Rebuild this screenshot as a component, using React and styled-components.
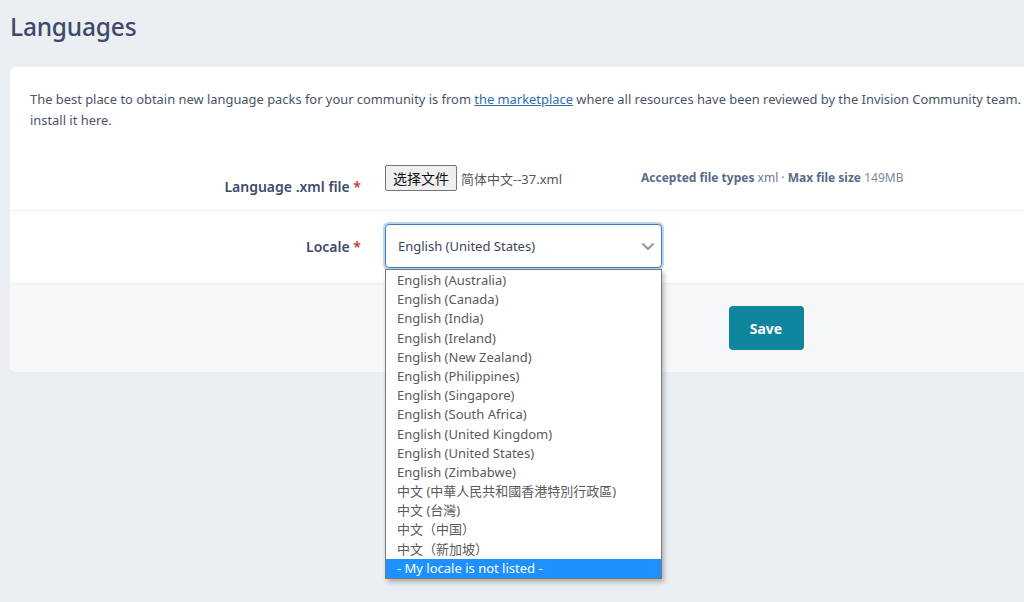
import React from 'react';
import styled, { createGlobalStyle } from 'styled-components';

const GlobalStyle = createGlobalStyle`
  html {
    overflow: hidden;
    background: #ebeef2;
  }
  body {
    margin: 0;
    min-height: 602px;
    background: #ebeef2;
    font-family: "Noto Sans", "Open Sans", "Noto Sans CJK SC", sans-serif;
    color: #4a5468;
  }
`;

const locales = [
  'English (Australia)',
  'English (Canada)',
  'English (India)',
  'English (Ireland)',
  'English (New Zealand)',
  'English (Philippines)',
  'English (Singapore)',
  'English (South Africa)',
  'English (United Kingdom)',
  'English (United States)',
  'English (Zimbabwe)',
  '中文 (中華人民共和國香港特別行政區)',
  '中文 (台灣)',
  '中文（中国）',
  '中文（新加坡）',
  '- My locale is not listed -',
];

const App = () => {
  return (
    <Page>
      <GlobalStyle />
      <Title>Languages</Title>
      <Card>
        <Intro>
          The best place to obtain new language packs for your community is from{' '}
          <IntroLink href="#">the marketplace</IntroLink> where all resources have been reviewed by the
          Invision Community team.  If you have downloaded a language pack, you can
          <br />
          install it here.
        </Intro>

        <FormRow>
          <Label top={12}>
            Language .xml file <Required>*</Required>
          </Label>
          <FieldLine>
            <FilePicker>
              <NativeButton type="button">选择文件</NativeButton>
              <FileName>简体中文--37.xml</FileName>
            </FilePicker>
            <FileHint>
              <b>Accepted file types</b> xml · <b>Max file size</b> <span>149MB</span>
            </FileHint>
          </FieldLine>
        </FormRow>

        <FormRow last>
          <Label top={13}>
            Locale <Required>*</Required>
          </Label>
          <SelectWrap>
            <SelectBox>
              <span>English (United States)</span>
              <svg width="14" height="9" viewBox="0 0 14 9">
                <path d="M1.5 1.5 L7 7 L12.5 1.5" fill="none" stroke="#9a9a9a" strokeWidth="2.2" />
              </svg>
            </SelectBox>
            <DropList>
              {locales.map((l, idx) => (
                <Option key={idx} selected={idx === locales.length - 1}>
                  {l}
                </Option>
              ))}
            </DropList>
          </SelectWrap>
        </FormRow>

        <Footer>
          <SaveButton type="button">Save</SaveButton>
        </Footer>
      </Card>
    </Page>
  );
};

const Page = styled.div`
  padding: 0 10px;
`;

const Title = styled.h1`
  margin: 0;
  padding-top: 10px;
  font-size: 24.5px;
  line-height: 34px;
  font-weight: 500;
  color: #3e4a6b;
  letter-spacing: -0.2px;
`;

const Card = styled.div`
  margin-top: 23px;
  width: 1512px;
  background: #fff;
  border-radius: 6px;
`;

const Intro = styled.p`
  margin: 0;
  padding: 22px 20px 19px;
  font-size: 12.9px;
  line-height: 21px;
  color: #4a5468;
  white-space: pre;
`;

const IntroLink = styled.a`
  color: #2d6ea8;
  text-decoration: underline;
`;

const FormRow = styled.div`
  display: grid;
  grid-template-columns: 375px 1fr;
  align-items: start;
  padding: ${(p) => (p.last ? '13px 0 15px' : '15px 0 13px')};
  border-bottom: 1px solid #ebeef2;
`;

const Label = styled.div`
  text-align: right;
  padding-right: 24px;
  padding-top: ${(p) => p.top}px;
  font-size: 14px;
  line-height: 20px;
  font-weight: 600;
  color: #3e4a6b;
`;

const Required = styled.span`
  color: #c5353a;
`;

const FieldLine = styled.div`
  display: flex;
  align-items: center;
  gap: 24px;
`;

const FilePicker = styled.div`
  display: flex;
  align-items: center;
  gap: 4px;
  width: 232px;
`;

const NativeButton = styled.button`
  height: 26px;
  padding: 0 7px;
  font-family: "Noto Sans CJK SC", sans-serif;
  font-size: 14px;
  color: #111;
  background: #efefef;
  border: 1px solid #767676;
  border-radius: 2px;
`;

const FileName = styled.span`
  font-family: "Noto Sans", "Noto Sans CJK SC", sans-serif;
  font-size: 13px;
  color: #555;
`;

const FileHint = styled.div`
  margin-top: -2px;
  font-size: 12px;
  color: #6a7892;
  b {
    font-weight: 700;
    color: #5a6a8c;
  }
  span {
    color: #7a879e;
  }
`;

const SelectWrap = styled.div`
  position: relative;
  width: 277px;
`;

const SelectBox = styled.div`
  display: flex;
  align-items: center;
  justify-content: space-between;
  height: 44px;
  box-sizing: border-box;
  padding: 0 6px 0 12px;
  border: 1px solid #3f7fbd;
  border-radius: 4px;
  box-shadow: 0 0 0 2px #bcd6ee;
  background: #fff;
  font-size: 13px;
  color: #3c4558;
`;

const DropList = styled.div`
  position: absolute;
  left: 0;
  top: 45px;
  width: 277px;
  box-sizing: border-box;
  padding-top: 1px;
  background: #fff;
  border: 1px solid #7a7a7a;
  box-shadow: 2px 3px 5px rgba(0, 0, 0, 0.28);
  z-index: 5;
`;

const Option = styled.div`
  height: 19.2px;
  line-height: 19px;
  padding-left: 11px;
  font-family: "Noto Sans", "Noto Sans CJK SC", sans-serif;
  font-size: 13px;
  white-space: nowrap;
  color: ${(p) => (p.selected ? '#fff' : '#5a5a5a')};
  background: ${(p) => (p.selected ? '#1e90ff' : 'transparent')};
`;

const Footer = styled.div`
  display: flex;
  justify-content: center;
  padding: 22px 0;
  background: #f6f7f9;
  border-radius: 0 0 6px 6px;
`;

const SaveButton = styled.button`
  width: 75px;
  height: 44px;
  border: 0;
  border-radius: 4px;
  background: #10869e;
  color: #fff;
  font-family: "Noto Sans", sans-serif;
  font-size: 14px;
  font-weight: 700;
`;

export default App;
